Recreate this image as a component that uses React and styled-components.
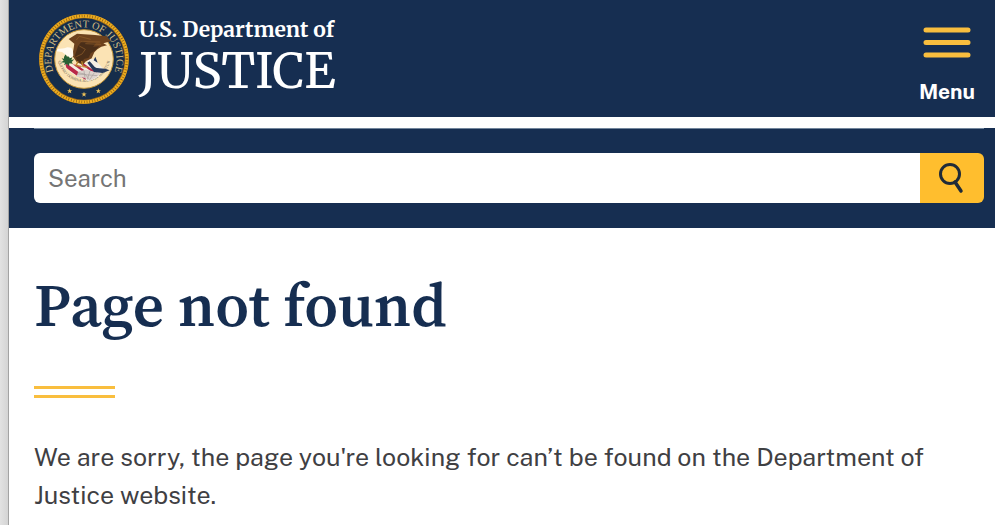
import React from "react";
import styled, { createGlobalStyle } from "styled-components";

const navy = "#162e51";
const gold = "#ffbe2e";
const sans = '"Public Sans", Inter, "Open Sans", sans-serif';
const headingSerif = '"Source Serif Pro", "Source Serif 4", "Liberation Serif", serif';
const brandSerif = 'Merriweather, "Source Serif 4", "Noto Serif", "Liberation Serif", serif';

const GlobalStyle = createGlobalStyle`
  *, *::before, *::after { box-sizing: border-box; }
  body { margin: 0; background: #fff; font-family: ${sans}; }
`;

const Shell = styled.div`
  display: grid;
  grid-template-columns: 9px minmax(0, 1fr);
  min-height: 100vh;
`;

const Edge = styled.div`
  background: linear-gradient(90deg, #e2e2e2, #d4d4d4);
  border-right: 1px solid #a3a3a3;
`;

const Header = styled.header`
  display: flex;
  justify-content: space-between;
  align-items: flex-start;
  height: 117px;
  padding: 13px 16px 0 29px;
  background: ${navy};
`;

const Brand = styled.a`
  display: flex;
  gap: 9px;
  color: #fff;
  text-decoration: none;
`;

const BrandText = styled.span`
  display: flex;
  flex-direction: column;
  padding-top: 4px;
  font-family: ${brandSerif};
  white-space: nowrap;
`;

const BrandTop = styled.span`
  font-size: 21px;
  font-weight: 700;
  line-height: 26px;
`;

const BrandName = styled.span`
  font-size: 49px;
  line-height: 56px;
`;

const MenuButton = styled.button`
  display: flex;
  flex-direction: column;
  align-items: center;
  gap: 20px;
  padding: 14px 4px 0;
  border: 0;
  background: transparent;
  color: #fff;
  font: 700 21px/28px ${sans};
`;

const SearchBand = styled.div`
  margin-top: 11px;
  padding: 0 11px 25px 25px;
  background: ${navy};
`;

const SearchForm = styled.form`
  display: flex;
  padding-top: 24px;
  border-top: 1px solid #71859c;
`;

const SearchInput = styled.input`
  flex: 1;
  min-width: 0;
  height: 50px;
  padding: 0 14px;
  border: 0;
  border-radius: 6px 0 0 6px;
  background: #fff;
  color: #3d4551;
  font: 400 24px/30px ${sans};
  &::placeholder { color: #757575; opacity: 1; }
`;

const SearchButton = styled.button`
  display: grid;
  place-items: center;
  width: 64px;
  height: 50px;
  padding: 0;
  border: 0;
  border-radius: 0 6px 6px 0;
  background: ${gold};
`;

const Content = styled.main`
  padding: 42px 25px 0;
`;

const Title = styled.h1`
  margin: 0;
  color: ${navy};
  font: 600 61px/70px ${headingSerif};
`;

const Rule = styled.div`
  width: 81px;
  height: 12px;
  margin: 46px 0 40px;
  border: solid #f9be3e;
  border-width: 3px 0;
`;

const Message = styled.p`
  margin: 0;
  color: #3f4043;
  font: 400 25px/38px ${sans};
`;

const star = "M0-8 2-2.6 8-2.5 3.2 1 5 7 0 3.4-5 7-3.2 1-8-2.5-2-2.6Z";

function Seal() {
  return (
    <svg width="92" height="92" viewBox="0 0 276 276" role="img" aria-label="Department of Justice seal">
      <defs>
        <path id="seal-name" d="M52.5 189A98 98 0 1 1 223.5 189" />
        <path id="seal-motto" d="M59 128A79 79 0 0 0 217 128" />
        <clipPath id="shield"><path d="M76 147Q112 164 159 145L194 167Q187 196 150 204L115 188Q85 174 76 147Z" /></clipPath>
      </defs>
      <circle cx="138" cy="138" r="135" fill="#93651b" />
      <circle cx="138" cy="138" r="129" fill="none" stroke="#edac1e" strokeWidth="10" />
      <circle cx="138" cy="138" r="129" fill="none" stroke="#805718" strokeWidth="8" strokeDasharray="2 6" />
      <circle cx="138" cy="138" r="122" fill="#152d4b" />
      <circle cx="138" cy="138" r="88" fill="#fbe3b4" stroke="#c79637" strokeWidth="3" />
      <text fill="#d3bd83" fontFamily="Liberation Serif, serif" fontSize="31">
        <textPath href="#seal-name" startOffset="50%" textAnchor="middle">DEPARTMENT OF JUSTICE</textPath>
      </text>
      <text fill="#675f55" fontFamily="Liberation Serif, serif" fontSize="12">
        <textPath href="#seal-motto" startOffset="50%" textAnchor="middle">QUI PRO DOMINA JUSTITIA SEQUITUR</textPath>
      </text>
      <g clipPath="url(#shield)">
        <path fill="#f4eee4" d="M65 130H205V220H65Z" />
        <path stroke="#b92848" strokeWidth="7" d="m84 154 60 44m-38-47 54 40m-33-43 48 34m-91-22 44 32" />
        <path fill="#253e72" d="m140 139 31 29 28 5-20-34Z" />
      </g>
      <path fill="#ddd3cd" d="m122 175 22-5 29 7 15 5-16 12-18 9-16-9-23-3Z" />
      <path fill="none" stroke="#a79e9b" strokeWidth="2" d="m119 179 22 4 11 14m-14-23 3 22m15-22-8 25m21-20-14 21m-38-17 61 5" />
      <path fill="#286034" d="m78 132 5-9 4 8 9-4-2 9 9-3-3 8 9-2-8 8 4 5-11-1-1 9-6-7-9 3 3-7-12-1 8-5-6-7 7 1Z" />
      <path fill="#f5efe5" d="m150 137 20 2 32 35-45-16-12-17Z" />
      <path fill="#27395b" d="m155 145 18 20 29 2 13 5-21 8-26-3-20-28Zm17-14 7 18-12-7Z" />
      <path fill="#6d421e" d="M92 78 117 62 171 66 206 70 219 85 196 91 207 97 190 101 178 109 169 118 161 136 142 146 135 156 116 147 103 128 107 105 109 92Z" />
      <path fill="#4a2e18" d="m120 100 12-16 17 5 25 1-9 11 19-1-14 13-12 8-6 13-14 4-6 12-13-3-8-20Z" />
      <path fill="none" stroke="#93612c" strokeWidth="2" d="m115 81 9-11 34 9m-30 7 59 1m-45 5 47 2m-65 5 18 10-10 14-17 8" />
      <path fill="#fffaf0" d="m79 106-20 2-4 7 17 2 9 7 17 11 8-7-1-15-5-9-12-1Z" />
      <path fill="none" stroke="#bb842a" strokeWidth="4" d="m120 145-6 13 17 2m0-16 4 17 14 1" />
      <g fill="#ecc158">
        <path transform="translate(95 234)" d={star} />
        <path transform="translate(138 244)" d={star} />
        <path transform="translate(181 234)" d={star} />
      </g>
    </svg>
  );
}

function MenuIcon() {
  return (
    <svg width="48" height="31" viewBox="0 0 48 31" aria-hidden="true">
      <path d="M3 3H45M3 15.5H45M3 28H45" stroke="#f9be3e" strokeWidth="5" strokeLinecap="round" />
    </svg>
  );
}

function SearchIcon() {
  return (
    <svg width="28" height="32" viewBox="0 0 28 32" fill="none" stroke="#202b38" aria-hidden="true">
      <circle cx="12" cy="12" r="9.5" strokeWidth="3" />
      <path d="M17 20 23 29" strokeWidth="3.5" strokeLinecap="round" />
    </svg>
  );
}

export default function App() {
  return (
    <>
      <GlobalStyle />
      <Shell>
        <Edge />
        <div>
          <Header>
            <Brand href="#">
              <Seal />
              <BrandText>
                <BrandTop>U.S. Department of</BrandTop>
                <BrandName>JUSTICE</BrandName>
              </BrandText>
            </Brand>
            <MenuButton type="button"><MenuIcon />Menu</MenuButton>
          </Header>
          <SearchBand>
            <SearchForm role="search">
              <SearchInput type="search" placeholder="Search" aria-label="Search" />
              <SearchButton type="button" aria-label="Submit search"><SearchIcon /></SearchButton>
            </SearchForm>
          </SearchBand>
          <Content>
            <Title>Page not found</Title>
            <Rule />
            <Message>
              We are sorry, the page you're looking for can’t be found on the Department of Justice website.
            </Message>
          </Content>
        </div>
      </Shell>
    </>
  );
}
